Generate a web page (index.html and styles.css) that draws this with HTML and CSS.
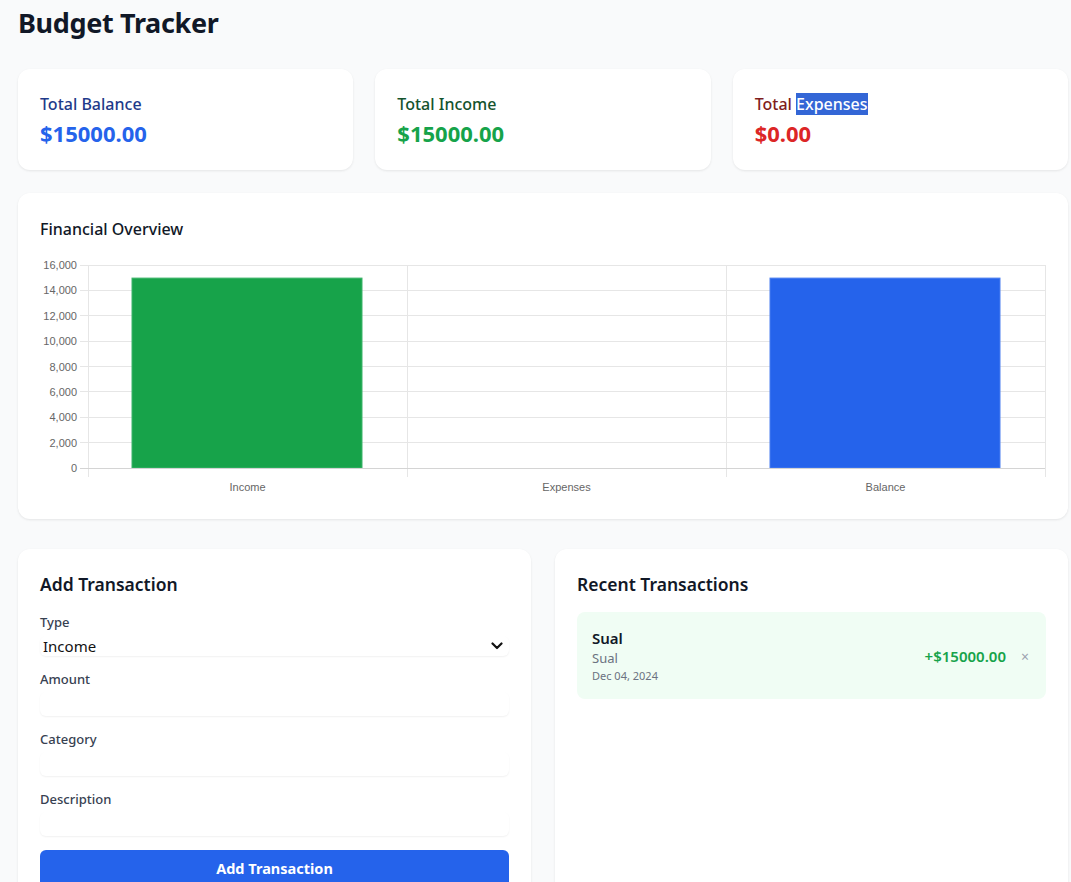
FILE: index.html
```html
<!DOCTYPE html>
<html lang="en">
<head>
<meta charset="utf-8">
<title>Budget Tracker</title>
<link rel="stylesheet" href="styles.css">
</head>
<body>
<div class="page">
  <h1 class="title">Budget Tracker</h1>

  <div class="stats">
    <div class="card stat">
      <div class="stat-label blue-label">Total Balance</div>
      <div class="stat-value blue">$15000.00</div>
    </div>
    <div class="card stat">
      <div class="stat-label green-label">Total Income</div>
      <div class="stat-value green">$15000.00</div>
    </div>
    <div class="card stat">
      <div class="stat-label red-label">Total <span class="selected">Expenses</span></div>
      <div class="stat-value red">$0.00</div>
    </div>
  </div>

  <div class="card chart-card">
    <h2 class="card-title">Financial Overview</h2>
    <svg class="chart" width="1006" height="244" viewBox="0 0 1006 244" xmlns="http://www.w3.org/2000/svg">
      <g stroke="#e6e6e6" stroke-width="1" shape-rendering="crispEdges">
        <line x1="40" y1="12" x2="1005" y2="12"/>
        <line x1="40" y1="37.4" x2="1005" y2="37.4"/>
        <line x1="40" y1="62.75" x2="1005" y2="62.75"/>
        <line x1="40" y1="88.1" x2="1005" y2="88.1"/>
        <line x1="40" y1="113.5" x2="1005" y2="113.5"/>
        <line x1="40" y1="138.9" x2="1005" y2="138.9"/>
        <line x1="40" y1="164.25" x2="1005" y2="164.25"/>
        <line x1="40" y1="189.6" x2="1005" y2="189.6"/>
        <line x1="48" y1="12" x2="48" y2="224"/>
        <line x1="367" y1="12" x2="367" y2="224"/>
        <line x1="686" y1="12" x2="686" y2="224"/>
        <line x1="1005" y1="12" x2="1005" y2="224"/>
      </g>
      <rect x="92" y="25.1" width="230" height="189.9" fill="#17a34a" stroke="#3cb46a" stroke-width="1"/>
      <rect x="730" y="25.1" width="230" height="189.9" fill="#2563eb" stroke="#4a7ff0" stroke-width="1"/>
      <line x1="40" y1="215" x2="1005" y2="215" stroke="#d4d4d4" stroke-width="1" shape-rendering="crispEdges"/>
      <g class="tick" text-anchor="end">
        <text x="37" y="16">16,000</text>
        <text x="37" y="41.4">14,000</text>
        <text x="37" y="66.75">12,000</text>
        <text x="37" y="92.1">10,000</text>
        <text x="37" y="117.5">8,000</text>
        <text x="37" y="142.9">6,000</text>
        <text x="37" y="168.25">4,000</text>
        <text x="37" y="193.6">2,000</text>
        <text x="37" y="219">0</text>
      </g>
      <g class="tick" text-anchor="middle">
        <text x="207.5" y="238">Income</text>
        <text x="526.5" y="238">Expenses</text>
        <text x="845.5" y="238">Balance</text>
      </g>
    </svg>
  </div>

  <div class="bottom">
    <div class="card panel">
      <h2 class="card-title panel-title">Add Transaction</h2>
      <form class="form">
        <div class="field">
          <label class="label label-select">Type</label>
          <div class="select-wrap">
            <select class="select">
              <option>Income</option>
              <option>Expense</option>
            </select>
            <svg class="chevron" width="12" height="8" viewBox="0 0 12 8" xmlns="http://www.w3.org/2000/svg"><path d="M1.5 1.5 L6 6 L10.5 1.5" fill="none" stroke="#111" stroke-width="2.2" stroke-linecap="round" stroke-linejoin="round"/></svg>
          </div>
        </div>
        <div class="field">
          <label class="label">Amount</label>
          <input class="input" type="text">
        </div>
        <div class="field">
          <label class="label">Category</label>
          <input class="input" type="text">
        </div>
        <div class="field">
          <label class="label">Description</label>
          <input class="input" type="text">
        </div>
        <button class="button" type="button">Add Transaction</button>
      </form>
    </div>

    <div class="card panel">
      <h2 class="card-title panel-title">Recent Transactions</h2>
      <div class="tx">
        <div class="tx-info">
          <div class="tx-name">Sual</div>
          <div class="tx-cat">Sual</div>
          <div class="tx-date">Dec 04, 2024</div>
        </div>
        <div class="tx-right">
          <span class="tx-amount">+$15000.00</span>
          <span class="tx-del">×</span>
        </div>
      </div>
    </div>
  </div>
</div>
</body>
</html>
```

FILE: styles.css
```css
* { box-sizing: border-box; }

html, body {
  margin: 0;
  padding: 0;
  background: #f9fafb;
  font-family: "Noto Sans", "Open Sans", sans-serif;
  color: #111827;
}

.page {
  padding: 5px 3px 0 18px;
}

.title {
  margin: 0 0 28px 0;
  font-size: 27px;
  line-height: 36px;
  font-weight: 700;
  letter-spacing: -0.35px;
  color: #111827;
}

.card {
  background: #ffffff;
  border-radius: 12px;
  box-shadow: 0 1px 3px rgba(0, 0, 0, 0.06), 0 1px 2px rgba(0, 0, 0, 0.03);
}

.stats {
  display: grid;
  grid-template-columns: repeat(3, 1fr);
  gap: 22px;
  margin-bottom: 23px;
}

.stat {
  padding: 23px 22px 0 22px;
  height: 101px;
}

.stat-label {
  font-size: 16px;
  line-height: 24px;
  font-weight: 500;
}

.stat-value {
  font-size: 22px;
  line-height: 34px;
  font-weight: 700;
}

.blue-label { color: #1e3a8a; }
.green-label { color: #14532d; }
.red-label { color: #7f1d1d; }
.blue { color: #2563eb; }
.green { color: #16a34a; }
.red { color: #dc2626; }

.selected {
  background: #3366d6;
  color: #ffffff;
}

.chart-card {
  padding: 22px;
  margin-bottom: 30px;
}

.card-title {
  margin: 0 0 10px 0;
  font-size: 16px;
  line-height: 28px;
  font-weight: 500;
  color: #111827;
}

.chart {
  display: block;
}

.tick {
  font-family: "Liberation Sans", Arial, sans-serif;
  font-size: 11px;
  fill: #666666;
}

.bottom {
  display: grid;
  grid-template-columns: 1fr 1fr;
  gap: 24px;
}

.panel {
  padding: 22px;
  min-height: 360px;
}

.panel-title {
  font-size: 17.5px;
  line-height: 26px;
  font-weight: 600;
  margin-bottom: 15px;
}

.form {
  display: flex;
  flex-direction: column;
}

.field {
  display: flex;
  flex-direction: column;
  margin-bottom: 13px;
}

.label {
  font-size: 13px;
  line-height: 20px;
  font-weight: 500;
  color: #374151;
  margin-bottom: 3px;
}

.label-select {
  margin-bottom: 4px;
}

.select-wrap {
  position: relative;
}

.select {
  -webkit-appearance: none;
  appearance: none;
  display: block;
  width: 100%;
  height: 20px;
  border: 0;
  border-radius: 6px;
  background: #ffffff;
  box-shadow: 0 1px 2px rgba(0, 0, 0, 0.06);
  font-family: "Noto Sans", sans-serif;
  font-size: 15px;
  line-height: 20px;
  padding: 0 0 0 3px;
  color: #111;
  outline: none;
}

.chevron {
  position: absolute;
  right: 6px;
  top: 6px;
  pointer-events: none;
}

.input {
  height: 24px;
  border: 0;
  border-radius: 6px;
  background: #ffffff;
  box-shadow: 0 1px 2px rgba(0, 0, 0, 0.06);
  outline: none;
  font-family: "Noto Sans", sans-serif;
  font-size: 14px;
}

.button {
  margin-top: 1px;
  height: 38px;
  border: 0;
  border-radius: 6px;
  background: #2563eb;
  color: #ffffff;
  font-family: "Noto Sans", sans-serif;
  font-size: 14.5px;
  font-weight: 700;
  padding: 0 0 2px 0;
}

.tx {
  display: flex;
  justify-content: space-between;
  align-items: center;
  margin-top: 1px;
  background: #f0fdf4;
  border-radius: 8px;
  padding: 16px 17px 15px 15px;
}

.tx-name {
  font-size: 15px;
  line-height: 21px;
  font-weight: 600;
  color: #111827;
}

.tx-cat {
  font-size: 13px;
  line-height: 18px;
  color: #6b7280;
}

.tx-date {
  font-size: 11px;
  line-height: 17px;
  color: #6b7280;
}

.tx-right {
  display: flex;
  align-items: center;
  gap: 15px;
}

.tx-amount {
  font-size: 15px;
  font-weight: 600;
  color: #16a34a;
}

.tx-del {
  font-size: 14px;
  color: #9ca3af;
}
```
